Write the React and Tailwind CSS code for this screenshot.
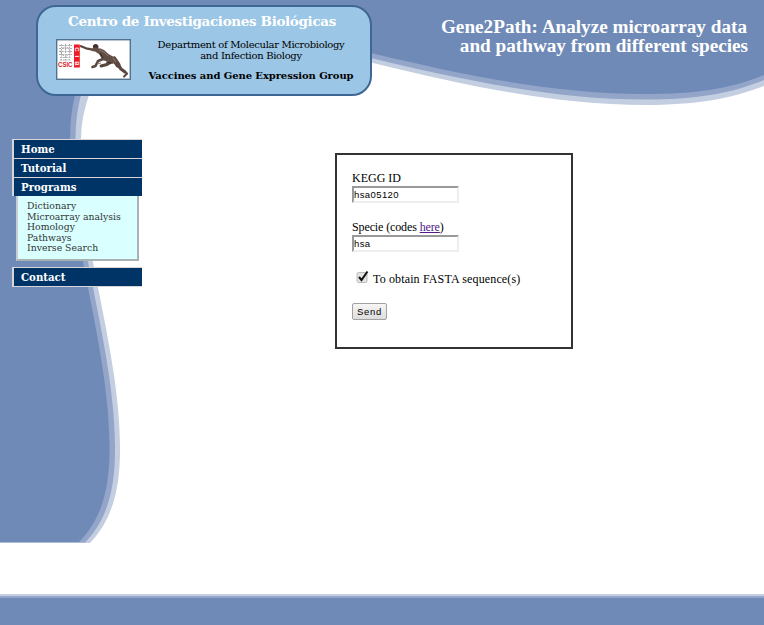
const curve = (
  "M0 0H764V75C730 89 695 94 645 94C560 94 475 78 371 53L100 53Q82 66 75 95Q70 115 70 139C70 185 75 225 83 262C94 320 109 385 109.5 445C110 485 103 518 79 542H0Z"
);
const curveMid = (
  "M0 0H764V80C730 94 695 99.5 645 99.5C560 99.5 475 83 371 58L110 58Q88 70 81 95Q75.5 115 75.5 139C75.5 185 80 225 88 262C99 320 114.500 385 115 445C115.500 485 109 518 85 542.500H0Z"
);
const curveLight = (
  "M0 0H764V86C730 99 695 105 645 105C560 105 475 88 371 62.500L120 62Q96 72 89 95Q81 118 81 139C81 185 85 225 93 262C104 320 119.500 385 120 445C120.500 485 114 518 90 543H0Z"
);

function Backdrop() {
  return (
    <svg className="col-start-1 row-start-1 h-[594px] w-[764px]" viewBox="0 0 764 594" aria-hidden="true">
      <path d={curveLight} fill="#c4cee1" />
      <path d={curveMid} fill="#93a5c9" />
      <path d={curve} fill="#6f8ab7" />
    </svg>
  );
}

function Logo() {
  return (
    <svg className="h-[41px] w-[75px] shrink-0" viewBox="0 0 75 41">
      <rect x=".7" y=".7" width="73.6" height="39.600" fill="#fff" stroke="#53738f" strokeWidth="1.400" />
      <g stroke="#aaa" strokeWidth="1" fill="none" strokeDasharray="2 .8">
        <path d="M3 6.500h13M3 9.500h13M3 12.500h13M3 15.500h13M4 18.500h11M4 21h10" />
        <path d="M5.500 5v16M9.500 5v18M13.500 5v16" strokeDasharray="1.500 1" />
        <circle cx="9.500" cy="12.500" r="4.500" />
      </g>
      <text x="2" y="28" fontFamily="Liberation Sans" fontSize="6.500" fontWeight="bold" fill="#d91d2a" textLength="14.500" lengthAdjust="spacingAndGlyphs">CSIC</text>
      <rect x="18" y="5.500" width="5.800" height="23" fill="#ed1b24" />
      <g fontFamily="Liberation Sans" fontSize="6" fontWeight="bold" fill="#fff" textAnchor="middle">
        <text transform="translate(18.800 10.500) rotate(90)">C</text>
        <text transform="translate(18.800 17.300) rotate(90)">I</text>
        <text transform="translate(18.800 24.300) rotate(90)">B</text>
      </g>
      <g fill="none" stroke="#5a473f" strokeLinecap="round" strokeLinejoin="round">
        <path d="M25 7.300l5 2 8 1.500" strokeWidth="2.300" />
        <path d="M53 21l-6-1-5 2-2.500 5-3 1" strokeWidth="2.600" />
        <path d="M57 22l-6 3.500-6 1.500" strokeWidth="3" />
        <path d="M58 20l4 6" strokeWidth="5" />
        <path d="M61.500 25l3.500 5 4 3" strokeWidth="3.200" />
        <path d="M69 33l2.200 1.500-3.200 3" strokeWidth="2" />
      </g>
      <ellipse cx="39.700" cy="7.800" rx="2.800" ry="2.500" fill="#493731" />
      <path d="M36 9.500q7-1.500 12 1.500l4.500 4 7 4 1.500 4-5 2-6-3-4-2-3-5-4-2.500-3.500-.5z" fill="#614e45" />
      <path d="M43 11l5 2 4 4M57 19l3 4M45 24l-4 1" stroke="#8f786d" strokeWidth="1" fill="none" />
      <path d="M37 7.500q1.500-2.500 4-1.500M44 14l3 5M50 23l5 1" stroke="#332622" strokeWidth="1" fill="none" />
    </svg>
  );
}

function Header() {
  return (
    <header className="flex h-[139px] justify-between pl-[36px] pr-[16px] pt-[5px]">
      <div className="h-[91px] w-[336px] shrink-0 rounded-[20px] border-2 border-[#3f6794] bg-[#9bc6e6] font-['DejaVu_Serif',serif]">
        <h1 className="mt-[5px] pl-[30px] text-[13.500px] font-bold leading-[18px] tracking-[-0.350px] whitespace-nowrap text-white">
          Centro de Investigaciones Biológicas
        </h1>
        <div className="mt-[9px] flex pl-[18px]">
          <Logo />
          <div className="ml-[7px] w-[226px] text-center whitespace-nowrap text-black">
            <p className="mt-px text-[10px] leading-[10.500px] tracking-[-0.320px]">
              Department of Molecular Microbiology
              <br />
              and Infection Biology
            </p>
            <p className="mt-[8px] text-[10px] font-bold leading-[13px] tracking-[-0.080px]">Vaccines and Gene Expression Group</p>
          </div>
        </div>
      </div>
      <h2 className="mt-[12px] text-right font-['Liberation_Serif',serif] text-[19.200px] font-bold leading-[19px] whitespace-nowrap text-white">
        <span className="block pr-px">Gene2Path: Analyze microarray data</span>
        <span className="block">and pathway from different species</span>
      </h2>
    </header>
  );
}

function MenuItem({ children }) {
  return (
    <a className="block h-[19px] border-t border-l-2 border-[#d8d5d8] bg-[#003366] pl-[7px] text-[10.200px] font-bold leading-[18px] text-white">
      {children}
    </a>
  );
}

function Menu() {
  return (
    <nav className="ml-[12px] w-[130px] shrink-0 font-['DejaVu_Serif',serif]">
      <div>
        <MenuItem>Home</MenuItem>
        <MenuItem>Tutorial</MenuItem>
        <MenuItem>Programs</MenuItem>
      </div>
      <ul className="ml-[4px] h-[65px] w-[123px] border-r-2 border-b-2 border-l-2 border-[#a9b2b2] border-l-[#c9ccd2] bg-[#d9ffff] pt-[5px] pl-[9px] text-[9.300px] leading-[10.500px] whitespace-nowrap text-[#333]">
        <li>Dictionary</li>
        <li>Microarray analysis</li>
        <li>Homology</li>
        <li>Pathways</li>
        <li>Inverse Search</li>
      </ul>
      <div className="mt-[6px] border-b border-[#d8d5d8]">
        <MenuItem>Contact</MenuItem>
      </div>
    </nav>
  );
}

function Field({ value }) {
  return (
    <input
      defaultValue={value}
      className="block h-[17px] w-[107px] border-2 border-[#eee] border-t-[#999] border-l-[#999] bg-white font-['Liberation_Sans',sans-serif] text-[9.500px] leading-[13px] tracking-[0.400px] text-black"
    />
  );
}

function PathForm() {
  return (
    <form className="mt-[14px] ml-[193px] h-[196px] w-[238px] border-2 border-[#333] bg-white pt-[16px] pl-[15px] font-['Liberation_Serif',serif] text-[12px] whitespace-nowrap text-black">
      <label className="block h-[15px] leading-[15px]">KEGG ID</label>
      <Field value="hsa05120" />
      <label className="mt-[17px] block h-[15px] leading-[15px] tracking-[-0.120px]">
        Specie (codes <a className="text-[#551a8b] underline">here</a>)
      </label>
      <Field value="hsa" />
      <label className="mt-[18px] ml-[4px] flex h-[16px] items-center">
        <svg className="-mt-[3px] mr-[4px] h-[14px] w-[13px]" viewBox="0 0 13 14">
          <rect x="1" y="2.500" width="10" height="10" rx="1.500" fill="#e4e4e4" stroke="#bbb" />
          <path d="M3 7l2.500 3L11.500 1.500" stroke="#111" strokeWidth="2" fill="none" />
        </svg>
        <span className="mt-[2px] tracking-[0.140px]">To obtain FASTA sequence(s)</span>
      </label>
      <button
        type="button"
        className="mt-[17px] block h-[17px] w-[35px] rounded-[2px] border border-[#a2a2a2] bg-linear-to-b from-[#f6f6f6] to-[#dddddd] text-center font-['Liberation_Sans',sans-serif] text-[9.500px] leading-[15px] tracking-[0.700px]"
      >
        Send
      </button>
    </form>
  );
}

export default function App() {
  return (
    <div className="flex h-[625px] w-[764px] flex-col overflow-hidden bg-white">
      <div className="grid h-[594px] shrink-0 grid-cols-[764px]">
        <Backdrop />
        <div className="col-start-1 row-start-1">
          <Header />
          <main className="flex">
            <Menu />
            <PathForm />
          </main>
        </div>
      </div>
      <footer className="h-[31px] border-t-2 border-[#c4cee1] bg-[#6f8ab7]">
        <div className="h-[2px] bg-[#93a5c9]" />
      </footer>
    </div>
  );
}
